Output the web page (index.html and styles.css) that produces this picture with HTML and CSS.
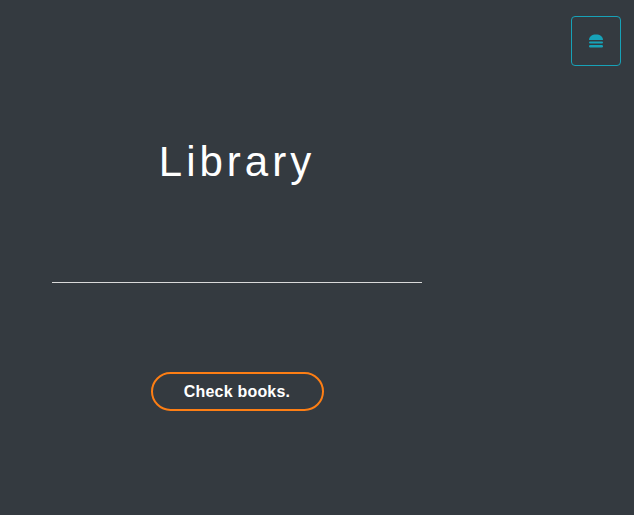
FILE: index.html
```html
<!DOCTYPE html>
<html>
<head>
<meta charset="utf-8">
<link rel="stylesheet" href="styles.css">
</head>
<body>
<button class="menu-btn" aria-label="menu">
  <svg width="16" height="14" viewBox="0 0 16 14">
    <path d="M1 6 C1 2.5 4 0.5 8 0.5 C12 0.5 15 2.5 15 6 Z" fill="#17a2b8"/>
    <rect x="1" y="7.5" width="14" height="2" rx="1" fill="#17a2b8"/>
    <rect x="1" y="11" width="14" height="2.5" rx="1.2" fill="#17a2b8"/>
  </svg>
</button>
<main class="content">
  <h1 class="title">Library</h1>
  <hr class="divider">
  <button class="cta">Check books.</button>
</main>
</body>
</html>
```
FILE: styles.css
```css
html, body {
  margin: 0;
  padding: 0;
  background: #343a40;
  height: 100%;
}
body {
  font-family: "Liberation Sans", Arial, sans-serif;
  color: #fff;
}
.menu-btn {
  position: absolute;
  top: 16px;
  left: 571px;
  width: 50px;
  height: 50px;
  box-sizing: border-box;
  border: 1px solid #17a2b8;
  border-radius: 4px;
  background: transparent;
  display: flex;
  align-items: center;
  justify-content: center;
  padding: 0;
}
.content {
  width: 370px;
  margin-left: 52px;
  display: flex;
  flex-direction: column;
  align-items: center;
  padding-top: 134px;
}
.title {
  margin: 0;
  font-size: 42px;
  font-weight: 400;
  letter-spacing: 4px;
  line-height: 56px;
}
.divider {
  width: 100%;
  margin: 92px 0 0 0;
  border: 0;
  border-top: 1px solid #d9d9d9;
  height: 0;
}
.cta {
  margin-top: 89px;
  width: 173px;
  height: 39px;
  border: 2px solid #fd7e14;
  border-radius: 20px;
  background: transparent;
  color: #fff;
  font-family: "Liberation Sans", Arial, sans-serif;
  font-weight: 700;
  font-size: 16px;
  letter-spacing: 0.2px;
  padding: 0;
}
```
